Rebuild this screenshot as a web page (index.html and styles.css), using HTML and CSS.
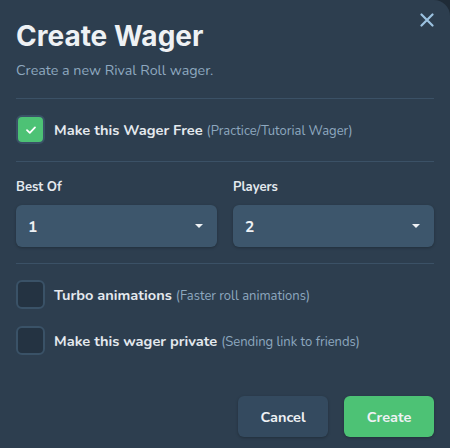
FILE: index.html
```html
<!DOCTYPE html>
<html>
<head>
<meta charset="utf-8">
<link rel="stylesheet" href="styles.css">
</head>
<body>
<div class="modal">
  <button class="close" aria-label="Close">
    <svg width="14" height="14" viewBox="0 0 14 14"><path d="M1.5 1.5 L12.5 12.5 M12.5 1.5 L1.5 12.5" stroke="#9cc2e0" stroke-width="2.2" stroke-linecap="round"/></svg>
  </button>
  <h1 class="title">Create Wager</h1>
  <p class="subtitle">Create a new Rival Roll wager.</p>
  <hr class="divider">
  <label class="check-row free-row">
    <span class="box checked">
      <svg width="12" height="10" viewBox="0 0 12 10"><path d="M2 5.2 L4.8 7.8 L10 2.4" fill="none" stroke="#fff" stroke-width="1.8" stroke-linecap="round" stroke-linejoin="round"/></svg>
    </span>
    <span class="label">Make this Wager Free <span class="hint">(Practice/Tutorial Wager)</span></span>
  </label>
  <hr class="divider">
  <div class="fields">
    <div class="field">
      <div class="field-label">Best Of</div>
      <div class="select"><span>1</span><span class="caret"></span></div>
    </div>
    <div class="field">
      <div class="field-label">Players</div>
      <div class="select"><span>2</span><span class="caret"></span></div>
    </div>
  </div>
  <hr class="divider">
  <div class="options">
    <label class="check-row">
      <span class="box"></span>
      <span class="label">Turbo animations <span class="hint">(Faster roll animations)</span></span>
    </label>
    <label class="check-row">
      <span class="box"></span>
      <span class="label">Make this wager private <span class="hint">(Sending link to friends)</span></span>
    </label>
  </div>
  <div class="actions">
    <button class="btn cancel">Cancel</button>
    <button class="btn create">Create</button>
  </div>
</div>
</body>
</html>
```
FILE: styles.css
```css
html, body {
  margin: 0;
  padding: 0;
  background: #1f2b37;
}
body {
  width: 450px;
  height: 448px;
  overflow: hidden;
  font-family: "Nunito", Lato, "Noto Sans", sans-serif;
}
.modal {
  position: relative;
  box-sizing: border-box;
  width: 450px;
  height: 448px;
  background: #2d3e4f;
  border-top-right-radius: 16px;
  padding: 18px 16px 0 16px;
  color: #e7ecf1;
}
.close {
  position: absolute;
  top: 13px;
  right: 16px;
  background: none;
  border: 0;
  padding: 0;
  width: 14px;
  height: 14px;
  display: flex;
}
.title {
  margin: 0;
  font-family: Inter, "Noto Sans", sans-serif;
  font-weight: 700;
  font-size: 28px;
  line-height: 36px;
  color: #eef1f4;
}
.subtitle {
  margin: 7px 0 0 0;
  font-size: 14.3px;
  line-height: 20px;
  color: #8ea8bf;
}
.divider {
  border: 0;
  height: 1px;
  background: #3b5166;
  margin: 0;
}
.subtitle + .divider {
  margin-top: 17px;
}
.check-row {
  display: flex;
  align-items: center;
  gap: 9px;
  height: 29px;
}
.free-row {
  margin: 16px 0 17px 0;
}
.box {
  box-sizing: border-box;
  width: 29px;
  height: 29px;
  border-radius: 6px;
  border: 2px solid #3a5267;
  background: #243342;
  display: flex;
  align-items: center;
  justify-content: center;
  flex: none;
}
.box.checked {
  background: #4dc275;
}
.label {
  font-weight: 700;
  font-size: 14.6px;
  color: #e4e9ee;
}
.hint {
  font-weight: 400;
  font-size: 13px;
  color: #8ea8bf;
}
.fields {
  display: grid;
  grid-template-columns: 1fr 1fr;
  gap: 16px;
  margin: 17px 0 16px 0;
}
.field-label {
  font-weight: 700;
  font-size: 13px;
  line-height: 16px;
  color: #e4e9ee;
  margin-bottom: 10px;
}
.select {
  height: 42px;
  border-radius: 6px;
  background: #3d566c;
  box-shadow: 0 1px 3px rgba(0, 0, 0, 0.25);
  display: flex;
  align-items: center;
  justify-content: space-between;
  padding: 0 14px 0 12px;
  font-size: 15.5px;
  font-weight: 700;
  color: #eef1f4;
}
.caret {
  width: 0;
  height: 0;
  border-left: 4px solid transparent;
  border-right: 4px solid transparent;
  border-top: 4px solid #eef1f4;
}
.options {
  display: flex;
  flex-direction: column;
  gap: 17px;
  margin-top: 16px;
}
.actions {
  display: flex;
  justify-content: flex-end;
  gap: 16px;
  margin-top: 41px;
}
.btn {
  width: 90px;
  height: 41px;
  border: 0;
  border-radius: 6px;
  font-family: "Nunito", Lato, "Noto Sans", sans-serif;
  font-weight: 700;
  font-size: 14.5px;
  color: #eef1f4;
  box-shadow: 0 1px 3px rgba(0, 0, 0, 0.25);
}
.cancel {
  background: #344a5f;
}
.create {
  background: #4dc275;
}
```
